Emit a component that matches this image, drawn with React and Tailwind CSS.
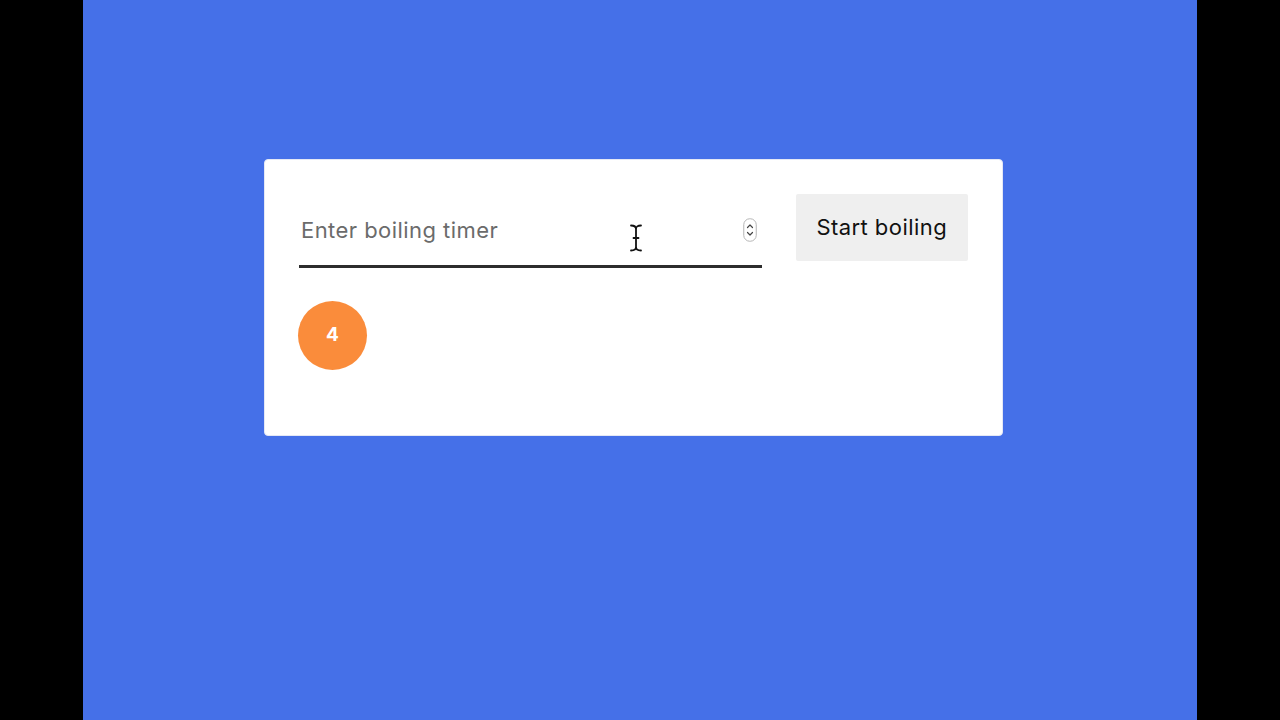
export default function App() {
  return (
    <div className="w-[1280px] h-[720px] bg-black flex justify-center" style={{ fontFamily: '"Inter", "Liberation Sans", sans-serif' }}>
      <div className="w-[1114px] h-full bg-[#4570e8] pt-[159px] pl-[181px]">
        <div className="relative w-[739px] h-[277px] bg-white rounded-[4px] border border-[#e4e8f5] px-[34px] pt-[34px]">
          <div className="flex items-start gap-[34px]">
            <div className="relative w-[464px] h-[74px] border-b-[3px] border-[#2d2d2d] flex items-center">
              <span className="pl-[2px] pt-[2px] text-[22px] text-[#6b6b6b] tracking-[0.45px]">Enter boiling timer</span>
              <svg className="absolute left-[444px] top-[24px]" width="14" height="24" viewBox="0 0 14 24">
                <rect x="0.75" y="0.75" width="12.5" height="22.5" rx="6" fill="white" stroke="#b5b5b5" strokeWidth="1" />
                <path d="M4.5 9.5 L7 7 L9.5 9.5" fill="none" stroke="#444" strokeWidth="1.2" strokeLinecap="round" strokeLinejoin="round" />
                <path d="M4.5 14.5 L7 17 L9.5 14.5" fill="none" stroke="#444" strokeWidth="1.2" strokeLinecap="round" strokeLinejoin="round" />
              </svg>
            </div>
            <button className="w-[173px] h-[67px] bg-[#efefef] rounded-[2px] text-[22px] text-[#111] tracking-[0.45px] flex items-center justify-center">
              Start boiling
            </button>
          </div>
          <div className="mt-[33px] -ml-[1px] w-[69px] h-[69px] rounded-full bg-[#fa8c3b] flex items-center justify-center text-white font-bold text-[19px]">
            4
          </div>
          <svg className="absolute left-[365px] top-[64px]" width="12" height="28" viewBox="0 0 12 28">
            <path d="M1 1.5 Q6 1.5 6 5 Q6 1.5 11 1.5 M6 5 L6 23 Q6 26.5 1 26.5 M6 23 Q6 26.5 11 26.5 M3.5 14 L8.5 14" fill="none" stroke="#111" strokeWidth="1.8" strokeLinecap="round" />
          </svg>
        </div>
      </div>
    </div>
  );
}
